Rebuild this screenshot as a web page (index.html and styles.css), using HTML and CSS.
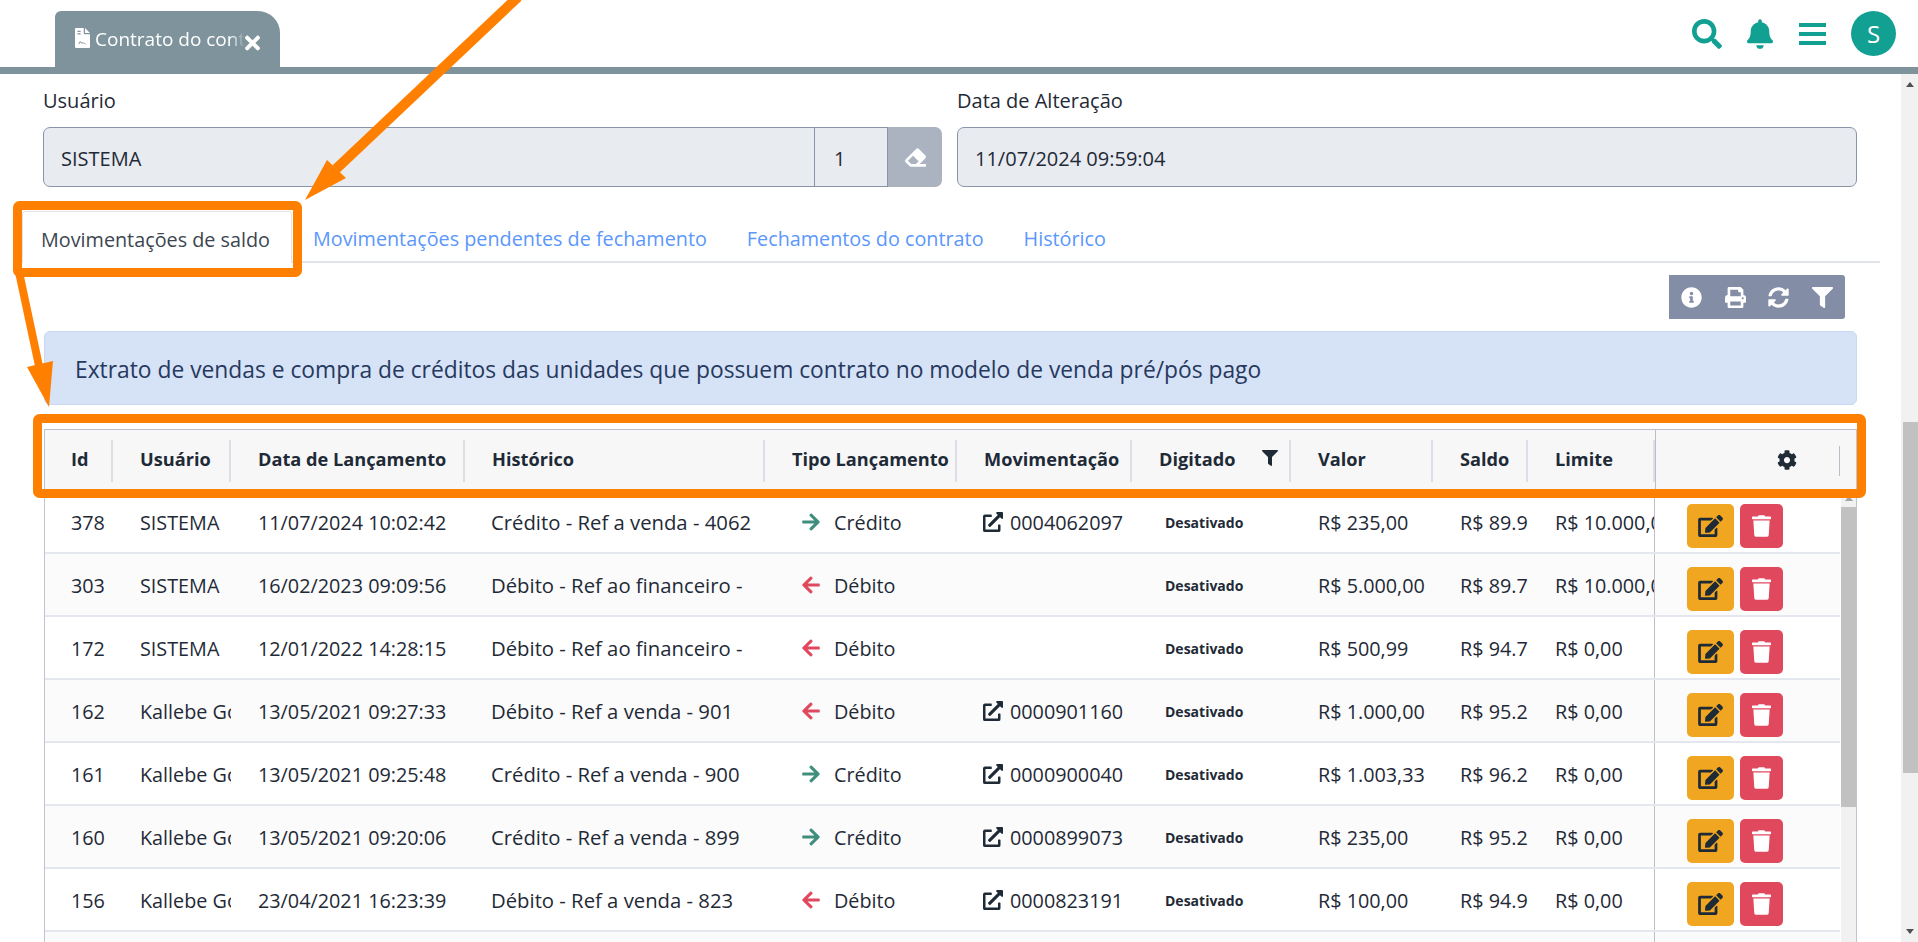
FILE: index.html
```html
<!DOCTYPE html>
<html lang="pt-BR">

<head>
    <meta charset="UTF-8">
    <meta name="viewport" content="width=device-width, initial-scale=1.0">
    <title>Contrato do contrato</title>
    <link rel="stylesheet" href="styles.css">
</head>

<body>
    <svg class="sprites" width="0" height="0">
        <symbol id="i-search" viewBox="0 0 512 512"><path d="M505 442.7L405.3 343c-4.5-4.5-10.6-7-17-7H372c27.6-35.3 44-79.7 44-128C416 93.1 322.9 0 208 0S0 93.1 0 208s93.1 208 208 208c48.3 0 92.7-16.4 128-44v16.3c0 6.4 2.5 12.5 7 17l99.7 99.7c9.4 9.4 24.6 9.4 33.9 0l28.3-28.3c9.4-9.4 9.4-24.6.1-34zM208 336c-70.7 0-128-57.2-128-128 0-70.7 57.2-128 128-128 70.7 0 128 57.2 128 128 0 70.7-57.2 128-128 128z"/></symbol>
        <symbol id="i-bell" viewBox="0 0 448 512"><path d="M224 512c35.32 0 63.97-28.65 63.97-64H160.03c0 35.35 28.65 64 63.97 64zm215.39-149.71c-19.32-20.76-55.47-51.99-55.47-154.29 0-77.7-54.48-139.9-127.94-155.16V32c0-17.67-14.32-32-31.98-32s-31.98 14.33-31.98 32v20.84C118.56 68.1 64.08 130.3 64.08 208c0 102.3-36.15 133.53-55.47 154.29-6 6.45-8.66 14.16-8.61 21.71.11 16.4 12.98 32 32.1 32h383.8c19.12 0 32-15.6 32.1-32 .05-7.55-2.61-15.27-8.61-21.71z"/></symbol>
        <symbol id="i-filter" viewBox="0 0 512 512"><path d="M487.976 0H24.028C2.71 0-8.047 25.866 7.058 40.971L192 225.941V432c0 7.831 3.821 15.17 10.237 19.662l80 55.98C298.02 518.69 320 507.493 320 487.98V225.941l184.947-184.97C520.021 25.896 509.338 0 487.976 0z"/></symbol>
        <symbol id="i-info" viewBox="0 0 512 512"><path d="M256 8C119.043 8 8 119.083 8 256c0 136.997 111.043 248 248 248s248-111.003 248-248C504 119.083 392.957 8 256 8zm0 110c23.196 0 42 18.804 42 42s-18.804 42-42 42-42-18.804-42-42 18.804-42 42-42zm56 254c0 6.627-5.373 12-12 12h-88c-6.627 0-12-5.373-12-12v-24c0-6.627 5.373-12 12-12h12v-64h-12c-6.627 0-12-5.373-12-12v-24c0-6.627 5.373-12 12-12h64c6.627 0 12 5.373 12 12v100h12c6.627 0 12 5.373 12 12v24z"/></symbol>
        <symbol id="i-print" viewBox="0 0 512 512"><path d="M448 192V77.25c0-8.49-3.37-16.62-9.37-22.63L393.37 9.37c-6-6-14.14-9.37-22.63-9.37H96C78.33 0 64 14.33 64 32v160c-35.35 0-64 28.65-64 64v112c0 8.84 7.16 16 16 16h48v96c0 17.67 14.33 32 32 32h320c17.67 0 32-14.33 32-32v-96h48c8.84 0 16-7.16 16-16V256c0-35.35-28.65-64-64-64zm-64 256H128v-96h256v96zm0-224H128V64h192v48c0 8.84 7.16 16 16 16h48v96zm48 72c-13.25 0-24-10.75-24-24 0-13.26 10.75-24 24-24s24 10.74 24 24c0 13.25-10.75 24-24 24z"/></symbol>
        <symbol id="i-sync" viewBox="0 0 512 512"><path d="M370.72 133.28C339.458 104.008 298.888 87.962 255.848 88c-77.458.068-144.328 53.178-162.791 126.85-1.344 5.363-6.122 9.15-11.651 9.15H24.103c-7.498 0-13.194-6.807-11.807-14.176C33.933 94.924 134.813 8 256 8c66.448 0 126.791 26.136 171.315 68.685L463.03 40.97C478.149 25.851 504 36.559 504 57.941V192c0 13.255-10.745 24-24 24H345.941c-21.382 0-32.09-25.851-16.971-40.971l41.75-41.749zM32 296h134.059c21.382 0 32.09 25.851 16.971 40.971l-41.75 41.75c31.262 29.273 71.835 45.319 114.876 45.28 77.418-.07 144.315-53.144 162.787-126.849 1.344-5.363 6.122-9.15 11.651-9.15h57.304c7.498 0 13.194 6.807 11.807 14.176C478.067 417.076 377.187 504 256 504c-66.448 0-126.791-26.136-171.315-68.685L48.97 471.03C33.851 486.149 8 475.441 8 454.059V320c0-13.255 10.745-24 24-24z"/></symbol>
        <symbol id="i-cog" viewBox="0 0 512 512"><path d="M487.4 315.7l-42.6-24.6c4.3-23.2 4.3-47 0-70.2l42.6-24.6c4.9-2.8 7.1-8.6 5.5-14-11.1-35.6-30-67.8-54.7-94.6-3.8-4.1-10-5.1-14.8-2.3L380.8 110c-17.9-15.4-38.5-27.3-60.8-35.1V25.8c0-5.6-3.9-10.5-9.4-11.7-36.7-8.2-74.3-7.8-109.2 0-5.5 1.2-9.4 6.1-9.4 11.7V75c-22.2 7.9-42.8 19.8-60.8 35.1L88.7 85.5c-4.9-2.8-11-1.9-14.8 2.3-24.7 26.7-43.6 58.9-54.7 94.6-1.7 5.4.6 11.2 5.5 14L67.3 221c-4.3 23.2-4.3 47 0 70.2l-42.6 24.6c-4.9 2.8-7.1 8.6-5.5 14 11.1 35.6 30 67.8 54.7 94.6 3.8 4.1 10 5.1 14.8 2.3l42.6-24.6c17.9 15.4 38.5 27.3 60.8 35.1v49.2c0 5.6 3.9 10.5 9.4 11.7 36.7 8.2 74.3 7.8 109.2 0 5.5-1.2 9.4-6.1 9.4-11.7v-49.2c22.2-7.9 42.8-19.8 60.8-35.1l42.6 24.6c4.9 2.8 11 1.9 14.8-2.3 24.7-26.7 43.6-58.9 54.7-94.6 1.5-5.5-.7-11.3-5.6-14.1zM256 336c-44.1 0-80-35.9-80-80s35.9-80 80-80 80 35.9 80 80-35.9 80-80 80z"/></symbol>
        <symbol id="i-edit" viewBox="0 0 576 512"><path d="M402.6 83.2l90.2 90.2c3.8 3.8 3.8 10 0 13.8L274.4 405.6l-92.8 10.3c-12.4 1.4-22.9-9.1-21.5-21.5l10.3-92.8L388.8 83.2c3.8-3.8 10-3.8 13.8 0zm162-22.9l-48.8-48.8c-15.2-15.2-39.9-15.2-55.2 0l-35.4 35.4c-3.8 3.8-3.8 10 0 13.8l90.2 90.2c3.8 3.8 10 3.8 13.8 0l35.4-35.4c15.2-15.3 15.2-40 0-55.2zM384 346.2V448H64V128h229.8c3.2 0 6.2-1.3 8.5-3.5l40-40c7.6-7.6 2.2-20.5-8.5-20.5H48C21.5 64 0 85.5 0 112v352c0 26.5 21.5 48 48 48h352c26.5 0 48-21.5 48-48V306.2c0-10.7-12.9-16-20.5-8.5l-40 40c-2.2 2.3-3.5 5.3-3.5 8.5z"/></symbol>
        <symbol id="i-trash" viewBox="0 0 448 512"><path d="M432 32H312l-9.4-18.7A24 24 0 0 0 281.1 0H166.8a23.72 23.72 0 0 0-21.4 13.3L136 32H16A16 16 0 0 0 0 48v32a16 16 0 0 0 16 16h416a16 16 0 0 0 16-16V48a16 16 0 0 0-16-16zM53.2 467a48 48 0 0 0 47.9 45h245.8a48 48 0 0 0 47.9-45L416 128H32z"/></symbol>
        <symbol id="i-right" viewBox="0 0 448 512"><path d="M190.5 66.9l22.2-22.2c9.4-9.4 24.6-9.4 33.9 0L441 239c9.4 9.4 9.4 24.6 0 33.9L246.6 467.3c-9.4 9.4-24.6 9.4-33.9 0l-22.2-22.2c-9.5-9.5-9.3-25 .4-34.3L311.4 296H24c-13.3 0-24-10.7-24-24v-32c0-13.3 10.7-24 24-24h287.4L190.9 101.2c-9.8-9.3-10-24.8-.4-34.3z"/></symbol>
        <symbol id="i-left" viewBox="0 0 448 512"><path d="M257.5 445.1l-22.2 22.2c-9.4 9.4-24.6 9.4-33.9 0L7 273c-9.4-9.4-9.4-24.6 0-33.9L201.4 44.7c9.4-9.4 24.6-9.4 33.9 0l22.2 22.2c9.5 9.5 9.3 25-.4 34.3L136.6 216H424c13.3 0 24 10.7 24 24v32c0 13.3-10.7 24-24 24H136.6l120.5 114.8c9.8 9.3 10 24.8.4 34.3z"/></symbol>
        <symbol id="i-link" viewBox="0 0 512 512"><path d="M432 320h-32a16 16 0 0 0-16 16v112H64V128h144a16 16 0 0 0 16-16V80a16 16 0 0 0-16-16H48a48 48 0 0 0-48 48v352a48 48 0 0 0 48 48h352a48 48 0 0 0 48-48V336a16 16 0 0 0-16-16zM488 0H360c-21.37 0-32.05 25.91-17 41l35.73 35.73L135 320.37a24 24 0 0 0 0 34L157.67 377a24 24 0 0 0 34 0l243.61-243.68L471 169c15 15 41 4.5 41-17V24a24 24 0 0 0-24-24z"/></symbol>
        <symbol id="i-eraser" viewBox="0 0 512 512"><path d="M497.941 273.941c18.745-18.745 18.745-49.137 0-67.882l-160-160c-18.745-18.745-49.137-18.745-67.882 0l-256 256c-18.745 18.745-18.745 49.137 0 67.882l96 96A48.004 48.004 0 0 0 144 480h356c6.627 0 12-5.373 12-12v-40c0-6.627-5.373-12-12-12H355.883l142.058-142.059zm-302.627-62.627l137.373 137.373L265.373 416H150.628l-80-80 124.686-124.686z"/></symbol>
        <symbol id="i-times" viewBox="0 0 352 512"><path d="M242.72 256l100.07-100.07c12.28-12.28 12.28-32.19 0-44.48l-22.24-22.24c-12.28-12.28-32.19-12.28-44.48 0L176 189.28 75.93 89.21c-12.28-12.28-32.19-12.28-44.48 0L9.21 111.45c-12.28 12.28-12.28 32.19 0 44.48L109.28 256 9.21 356.07c-12.28 12.28-12.28 32.19 0 44.48l22.24 22.24c12.28 12.28 32.2 12.28 44.48 0L176 322.72l100.07 100.07c12.28 12.28 32.2 12.28 44.48 0l22.24-22.24c12.28-12.28 12.28-32.19 0-44.48L242.72 256z"/></symbol>
        <symbol id="i-file" viewBox="0 0 384 512"><path fill-rule="evenodd" d="M224 0H24C11 0 0 11 0 24v464c0 13 11 24 24 24h336c13 0 24-11 24-24V160H248c-13 0-24-11-24-24V0zM64 72h80v28H64V72zm0 64h80v28H64v-28zm24 280c20-60 40-90 56-70 14 18 24 34 44 22 16-10 36 14 116 48h-40c-40-18-60-30-72-24-22 12-42-2-52-18-8-10-20 10-32 42H88zM256 0v128h128L256 0z"/></symbol>
    </svg>

    <header class="topbar">
        <div class="aba">
            <svg class="aba-doc"><use href="#i-file"/></svg>
            <span class="aba-titulo">Contrato do contrato</span>
            <svg class="aba-fechar"><use href="#i-times"/></svg>
        </div>
        <div class="topo-icones">
            <svg class="ic-busca"><use href="#i-search"/></svg>
            <svg class="ic-sino"><use href="#i-bell"/></svg>
            <div class="ic-menu"><span></span><span></span><span></span></div>
            <div class="avatar">S</div>
        </div>
    </header>

    <div class="pagina">
        <main class="conteudo">
            <div class="campos">
                <div class="campo">
                    <label>Usuário</label>
                    <div class="grupo">
                        <div class="caixa caixa-nome">SISTEMA</div>
                        <div class="caixa caixa-num">1</div>
                        <div class="caixa-limpar"><svg><use href="#i-eraser"/></svg></div>
                    </div>
                </div>
                <div class="campo">
                    <label>Data de Alteração</label>
                    <div class="grupo">
                        <div class="caixa caixa-data">11/07/2024 09:59:04</div>
                    </div>
                </div>
            </div>

            <nav class="abas">
                <a class="ativa">Movimentações de saldo</a>
                <a>Movimentações pendentes de fechamento</a>
                <a>Fechamentos do contrato</a>
                <a>Histórico</a>
            </nav>

            <div class="ferramentas">
                <svg><use href="#i-info"/></svg>
                <svg><use href="#i-print"/></svg>
                <svg><use href="#i-sync"/></svg>
                <svg><use href="#i-filter"/></svg>
            </div>

            <div class="aviso">Extrato de vendas e compra de créditos das unidades que possuem contrato no modelo de venda pré/pós pago</div>

            <div class="tabela">
                <div class="cabecalho">
                    <div>Id</div>
                    <div>Usuário</div>
                    <div>Data de Lançamento</div>
                    <div>Histórico</div>
                    <div>Tipo Lançamento</div>
                    <div>Movimentação</div>
                    <div>Digitado<svg class="filtro"><use href="#i-filter"/></svg></div>
                    <div>Valor</div>
                    <div>Saldo</div>
                    <div>Limite</div>
                    <div class="cab-acoes"><svg><use href="#i-cog"/></svg></div>
                </div>
                <div class="corpo">
                    <div class="linhas">
                        <div class="linha">
                            <div>378</div><div>SISTEMA</div><div>11/07/2024 10:02:42</div>
                            <div class="hist">Crédito - Ref a venda - 4062</div>
                            <div class="tipo"><svg class="credito"><use href="#i-right"/></svg>Crédito</div>
                            <div class="mov"><svg><use href="#i-link"/></svg>0004062097</div>
                            <div class="dig">Desativado</div>
                            <div>R$ 235,00</div><div>R$ 89.9</div><div>R$ 10.000,00</div>
                            <div class="acoes"><a class="b-editar"><svg><use href="#i-edit"/></svg></a><a class="b-excluir"><svg><use href="#i-trash"/></svg></a></div>
                        </div>
                        <div class="linha">
                            <div>303</div><div>SISTEMA</div><div>16/02/2023 09:09:56</div>
                            <div class="hist">Débito - Ref ao financeiro -</div>
                            <div class="tipo"><svg class="debito"><use href="#i-left"/></svg>Débito</div>
                            <div class="mov"></div>
                            <div class="dig">Desativado</div>
                            <div>R$ 5.000,00</div><div>R$ 89.7</div><div>R$ 10.000,00</div>
                            <div class="acoes"><a class="b-editar"><svg><use href="#i-edit"/></svg></a><a class="b-excluir"><svg><use href="#i-trash"/></svg></a></div>
                        </div>
                        <div class="linha">
                            <div>172</div><div>SISTEMA</div><div>12/01/2022 14:28:15</div>
                            <div class="hist">Débito - Ref ao financeiro -</div>
                            <div class="tipo"><svg class="debito"><use href="#i-left"/></svg>Débito</div>
                            <div class="mov"></div>
                            <div class="dig">Desativado</div>
                            <div>R$ 500,99</div><div>R$ 94.7</div><div>R$ 0,00</div>
                            <div class="acoes"><a class="b-editar"><svg><use href="#i-edit"/></svg></a><a class="b-excluir"><svg><use href="#i-trash"/></svg></a></div>
                        </div>
                        <div class="linha">
                            <div>162</div><div>Kallebe Gomes</div><div>13/05/2021 09:27:33</div>
                            <div class="hist">Débito - Ref a venda - 901</div>
                            <div class="tipo"><svg class="debito"><use href="#i-left"/></svg>Débito</div>
                            <div class="mov"><svg><use href="#i-link"/></svg>0000901160</div>
                            <div class="dig">Desativado</div>
                            <div>R$ 1.000,00</div><div>R$ 95.2</div><div>R$ 0,00</div>
                            <div class="acoes"><a class="b-editar"><svg><use href="#i-edit"/></svg></a><a class="b-excluir"><svg><use href="#i-trash"/></svg></a></div>
                        </div>
                        <div class="linha">
                            <div>161</div><div>Kallebe Gomes</div><div>13/05/2021 09:25:48</div>
                            <div class="hist">Crédito - Ref a venda - 900</div>
                            <div class="tipo"><svg class="credito"><use href="#i-right"/></svg>Crédito</div>
                            <div class="mov"><svg><use href="#i-link"/></svg>0000900040</div>
                            <div class="dig">Desativado</div>
                            <div>R$ 1.003,33</div><div>R$ 96.2</div><div>R$ 0,00</div>
                            <div class="acoes"><a class="b-editar"><svg><use href="#i-edit"/></svg></a><a class="b-excluir"><svg><use href="#i-trash"/></svg></a></div>
                        </div>
                        <div class="linha">
                            <div>160</div><div>Kallebe Gomes</div><div>13/05/2021 09:20:06</div>
                            <div class="hist">Crédito - Ref a venda - 899</div>
                            <div class="tipo"><svg class="credito"><use href="#i-right"/></svg>Crédito</div>
                            <div class="mov"><svg><use href="#i-link"/></svg>0000899073</div>
                            <div class="dig">Desativado</div>
                            <div>R$ 235,00</div><div>R$ 95.2</div><div>R$ 0,00</div>
                            <div class="acoes"><a class="b-editar"><svg><use href="#i-edit"/></svg></a><a class="b-excluir"><svg><use href="#i-trash"/></svg></a></div>
                        </div>
                        <div class="linha">
                            <div>156</div><div>Kallebe Gomes</div><div>23/04/2021 16:23:39</div>
                            <div class="hist">Débito - Ref a venda - 823</div>
                            <div class="tipo"><svg class="debito"><use href="#i-left"/></svg>Débito</div>
                            <div class="mov"><svg><use href="#i-link"/></svg>0000823191</div>
                            <div class="dig">Desativado</div>
                            <div>R$ 100,00</div><div>R$ 94.9</div><div>R$ 0,00</div>
                            <div class="acoes"><a class="b-editar"><svg><use href="#i-edit"/></svg></a><a class="b-excluir"><svg><use href="#i-trash"/></svg></a></div>
                        </div>
                        <div class="linha linha-vazia"><div></div><div></div><div></div><div></div><div></div><div></div><div></div><div></div><div></div><div></div><div class="acoes"></div></div>
                    </div>
                    <div class="barra barra-tabela">
                        <i class="seta-cima"></i>
                        <b></b>
                    </div>
                </div>
            </div>
        </main>
        <div class="barra barra-pagina">
            <i class="seta-cima"></i>
            <b></b>
            <i class="seta-baixo"></i>
        </div>
    </div>

    <!-- setas e quadros laranja desenhados por cima do print -->
    <svg class="anotacoes" width="1918" height="942" viewBox="0 0 1918 942">
        <g fill="none" stroke="#ff8000" stroke-linejoin="round">
            <rect x="17.5" y="205.5" width="280" height="67" rx="2" stroke-width="9"/>
            <rect x="37.5" y="418.5" width="1824" height="75" rx="2" stroke-width="9"/>
            <line x1="518" y1="-3" x2="336" y2="169" stroke-width="10"/>
            <line x1="19" y1="272" x2="39" y2="366" stroke-width="8"/>
        </g>
        <g fill="#ff8000">
            <polygon points="305,200 327,160 346,178"/>
            <polygon points="49,407 27,367 53,361"/>
        </g>
    </svg>
</body>

</html>
```

FILE: styles.css
```css
* {
    box-sizing: border-box;
}

html,
body {
    margin: 0;
    padding: 0;
    height: 942px;
    overflow: hidden;
}

body {
    font-family: "Open Sans", "Noto Sans", sans-serif;
    font-size: 20px;
    line-height: 29px;
    color: #1f2a37;
    background: #fff;
    position: relative;
}

.sprites {
    position: absolute;
}

svg {
    fill: currentColor;
    display: block;
}

/* topo */
.topbar {
    height: 74px;
    border-bottom: 7px solid #7f939c;
    display: flex;
    justify-content: space-between;
    align-items: flex-end;
    padding-left: 55px;
}

.aba {
    width: 225px;
    height: 56px;
    background: #7f939c;
    border-radius: 6px 22px 0 0;
    display: flex;
    align-items: center;
    padding: 0 20px 0 20px;
    color: #fff;
}

.aba-doc {
    width: 15px;
    height: 20px;
    flex: none;
    margin: -2px 5px 0 0;
}

.aba-titulo {
    flex: 1;
    overflow: hidden;
    white-space: nowrap;
    font-size: 19px;
    -webkit-mask-image: linear-gradient(to right, #000 90%, transparent 100%);
    mask-image: linear-gradient(to right, #000 90%, transparent 100%);
}

.aba-fechar {
    width: 15px;
    height: 22px;
    flex: none;
    margin-top: 7px;
}

.topo-icones {
    display: flex;
    align-items: center;
    height: 67px;
    color: #12a093;
    padding-right: 22px;
}

.ic-busca {
    width: 30px;
    height: 30px;
}

.ic-sino {
    width: 26px;
    height: 30px;
    margin-left: 25px;
}

.ic-menu {
    width: 27px;
    margin-left: 26px;
    display: flex;
    flex-direction: column;
    gap: 5px;
}

.ic-menu span {
    height: 4px;
    background: #12a093;
}

.avatar {
    width: 45px;
    height: 45px;
    border-radius: 50%;
    margin-left: 25px;
    background: #12a093;
    color: #fff;
    font-size: 24px;
    text-align: center;
    line-height: 45px;
}

/* area principal */
.pagina {
    display: flex;
    height: 868px;
}

.conteudo {
    flex: 1;
    min-width: 0;
    display: flex;
    flex-direction: column;
    padding: 12px 44px 0 44px;
    overflow: hidden;
}

.campos {
    display: grid;
    grid-template-columns: 899px 1fr;
    gap: 15px;
    margin-left: -1px;
}

.campo label {
    display: block;
    margin-bottom: 12px;
}

.grupo {
    display: flex;
    height: 60px;
}

.caixa {
    background: #e8ebef;
    border: 1px solid #8a94a8;
    display: flex;
    align-items: center;
    padding: 2px 0 0 17px;
}

.caixa-nome {
    flex: 1;
    border-radius: 7px 0 0 7px;
}

.caixa-num {
    width: 74px;
    margin-left: -1px;
    padding-left: 19px;
}

.caixa-limpar {
    width: 54px;
    background: #abb3c1;
    border-radius: 0 7px 7px 0;
    display: flex;
    align-items: center;
    justify-content: center;
    color: #fff;
}

.caixa-limpar svg {
    width: 21px;
    height: 21px;
}

.caixa-data {
    flex: 1;
    border-radius: 7px;
}

/* abas */
.abas {
    display: flex;
    height: 76px;
    margin: 0 -23px 0 -22px;
    padding-top: 24px;
    border-bottom: 2px solid #e2e4eb;
    font-size: 19.8px;
}

.abas a {
    color: #5c97fb;
    height: 52px;
    line-height: 55px;
    padding: 0 19px;
    white-space: nowrap;
    margin-right: 2px;
}

.abas a.ativa {
    color: #3c4650;
    background: #fff;
    width: 270px;
    padding-left: 18px;
    border: 1px solid #e2e4eb;
    border-bottom: 0;
    border-radius: 4px 4px 0 0;
}

.ferramentas {
    align-self: flex-end;
    width: 176px;
    height: 44px;
    margin: 12px 12px 0 0;
    background: #838ea6;
    border-radius: 0 3px 3px 0;
    display: flex;
    align-items: center;
    gap: 22.6px;
    padding-left: 12px;
    color: #fff;
}

.ferramentas svg {
    width: 21px;
    height: 21px;
}

.aviso {
    margin-top: 12px;
    height: 74px;
    flex: none;
    background: #d6e2f6;
    border: 1px solid #c8d8f2;
    border-radius: 6px;
    color: #26395e;
    font-size: 22.8px;
    line-height: 75px;
    padding-left: 30px;
    white-space: nowrap;
}

/* tabela */
.tabela {
    margin-top: 24px;
    flex: 1;
    min-height: 0;
    display: flex;
    flex-direction: column;
    border-left: 1px solid #c0c4d0;
    border-right: 1px solid #c0c4d0;
}

.cabecalho,
.linha {
    display: grid;
    grid-template-columns: 68px 118px 234px 300px 192px 175px 159px 142px 95px 127px 1fr;
}

.cabecalho {
    height: 62px;
    flex: none;
    background: #f7f7f7;
    border-top: 1px solid #bbbdc9;
    font-weight: 700;
    font-size: 18.2px;
}

.cabecalho > div {
    position: relative;
    padding: 15px 0 0 27px;
    white-space: nowrap;
}

.cabecalho > div:first-child,
.linha > div:first-child {
    padding-left: 26px;
}

.cabecalho > div::after {
    content: "";
    position: absolute;
    right: 0;
    top: 10px;
    height: 42px;
    width: 2px;
    background: #dcdfe5;
}

.cabecalho .filtro {
    position: absolute;
    right: 13px;
    top: 20px;
    width: 16px;
    height: 16px;
}

.cabecalho > .cab-acoes {
    border-left: 1px solid #bbbdc9;
    padding: 0;
}

.cab-acoes svg {
    position: absolute;
    left: 121px;
    top: 20px;
    width: 20px;
    height: 20px;
}

.cabecalho > .cab-acoes::after {
    right: 16px;
    top: 16px;
    height: 30px;
    width: 1px;
    background: #bbbdc9;
}

.corpo {
    flex: 1;
    min-height: 0;
    display: flex;
}

.linhas {
    flex: 1;
    min-width: 0;
    overflow: hidden;
}

.linha {
    height: 63px;
    border-bottom: 2px solid #e4e7ee;
    font-size: 19.8px;
}

.linha:nth-child(even) {
    background: #fbfbfb;
}

.linha > div {
    padding: 17px 0 0 27px;
    white-space: nowrap;
    overflow: hidden;
}

.linha .hist {
    font-size: 20.3px;
    padding-left: 26px;
}

.linha .tipo {
    display: flex;
    padding-left: 37px;
}

.tipo svg {
    width: 18px;
    height: 20px;
    margin: 4px 14px 0 0;
}

.credito {
    color: #3f8d7c;
}

.debito {
    color: #e0485e;
}

.linha .mov {
    display: flex;
    padding-left: 26px;
}

.mov svg {
    width: 20px;
    height: 20px;
    margin: 4px 7px 0 0;
}

.linha .dig {
    padding-left: 33px;
    font-weight: 700;
    font-size: 14px;
}

.linha > .acoes {
    display: flex;
    gap: 6px;
    padding: 13px 0 0 32px;
    border-left: 1px solid #bcc0cb;
    margin-left: -1px;
}

.acoes a {
    height: 44px;
    border-radius: 5px;
    display: flex;
    align-items: center;
    justify-content: center;
}

.b-editar {
    width: 47px;
    background: #f0a621;
    color: #1f2a37;
}

.b-editar svg {
    width: 25px;
    height: 22px;
}

.b-excluir {
    width: 43px;
    background: #e0485e;
    color: #fff;
}

.b-excluir svg {
    width: 19px;
    height: 22px;
}

/* barras de rolagem */
.barra {
    background: #f1f1f1;
    display: flex;
    flex-direction: column;
    align-items: flex-end;
    flex: none;
}

.barra b {
    display: block;
    background: #c1c1c1;
}

.barra-tabela {
    width: 15px;
    margin-left: 1px;
    padding-top: 5px;
    align-items: center;
}

.barra-tabela b {
    width: 100%;
    height: 300px;
    margin-top: 6px;
}

.barra-pagina {
    width: 17px;
    padding-top: 8px;
    position: relative;
}

.barra-pagina b {
    width: 15px;
    height: 351px;
    margin-top: 335px;
}

.seta-cima,
.seta-baixo {
    display: block;
    width: 0;
    height: 0;
    border-left: 4px solid transparent;
    border-right: 4px solid transparent;
}

.seta-cima {
    border-bottom: 5px solid #505050;
}

.barra-tabela .seta-cima {
    border-bottom-color: #a3a3a3;
}

.barra-pagina .seta-cima,
.barra-pagina .seta-baixo {
    margin-right: 4px;
}

.seta-baixo {
    border-top: 5px solid #505050;
    margin-top: auto;
    margin-bottom: 8px;
}

.anotacoes {
    position: absolute;
    left: 0;
    top: 0;
    pointer-events: none;
}
```
